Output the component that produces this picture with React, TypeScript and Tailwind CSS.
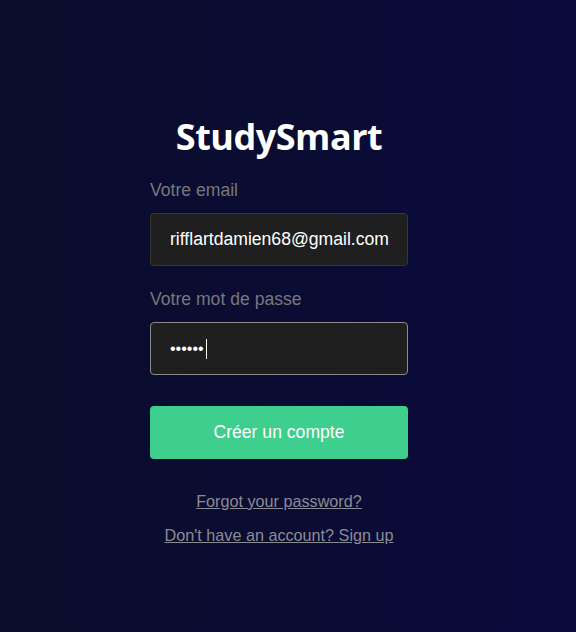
import React from 'react'

const App = () => {
  return (
    <div className="min-h-screen w-full bg-gradient-to-r from-[#0b0d2b] via-[#0a0c33] to-[#0a0a3c] font-['Liberation_Sans',Arial,sans-serif]">
      <div className="flex justify-center pr-[18px] pt-[114px]">
        <div className="w-[258px] flex flex-col">
          {/* Title */}
          <h1 className="text-center text-white text-[36px] font-bold leading-[46px] font-['Open_Sans',sans-serif] tracking-[-0.5px]">
            StudySmart
          </h1>

          {/* Email */}
          <label className="mt-[20px] text-[#77777f] text-[17.6px] leading-[20px]">Votre email</label>
          <div className="mt-[13px] h-[53px] rounded-[4px] bg-[#1f1f1f] border border-[#363636] flex items-center px-[19px]">
            <span className="text-white text-[17.6px]">rifflartdamien68@gmail.com</span>
          </div>

          {/* Password */}
          <label className="mt-[23px] text-[#77777f] text-[17.6px] leading-[20px]">Votre mot de passe</label>
          <div className="mt-[13px] h-[53px] rounded-[4px] bg-[#1f1f1f] border border-[#8a8a8a] flex items-center px-[19px]">
            <span className="text-white text-[16px] leading-none">••••••</span>
            <span className="ml-[2px] w-[1px] h-[20px] bg-white" />
          </div>

          {/* Submit */}
          <button className="mt-[31px] h-[53px] rounded-[4px] bg-[#3ecf8e] text-white text-[17.6px]">
            Créer un compte
          </button>

          {/* Links */}
          <div className="mt-[33px] flex flex-col items-center gap-[15px] text-[#8b8b93] text-[16.2px] leading-[19px]">
            <a className="underline">Forgot your password?</a>
            <a className="underline">Don't have an account? Sign up</a>
          </div>
        </div>
      </div>
    </div>
  )
}

export default App
